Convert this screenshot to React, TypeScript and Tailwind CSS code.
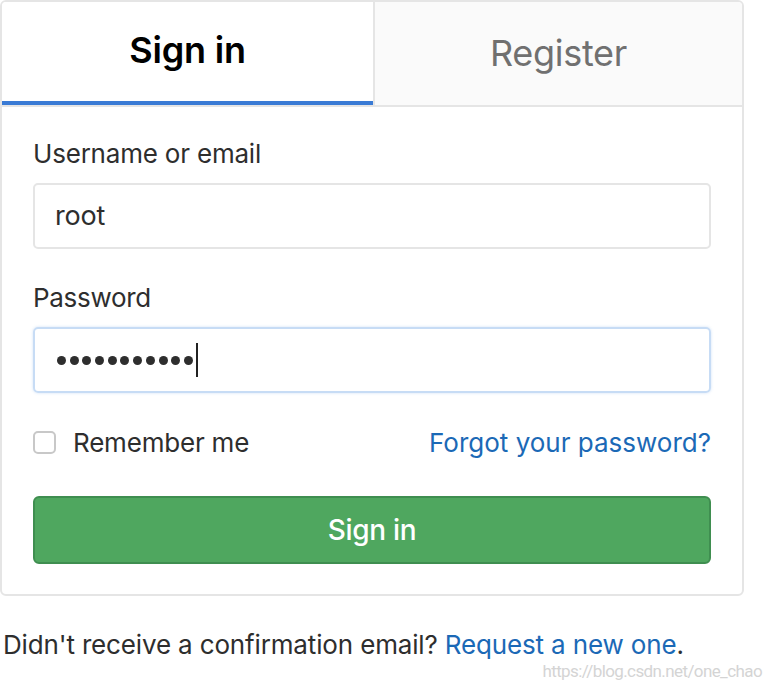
import React from 'react';

const font = { fontFamily: 'Inter, "Noto Sans", sans-serif' };

export default function App() {
  return (
    <div className="relative w-[764px] h-[684px] bg-white text-[#2e2e2e]" style={font}>
      <div className="w-[744px] rounded-[6px] border-2 border-[#e5e5e5] overflow-hidden">
        {/* tabs */}
        <div className="flex h-[105px] border-b-2 border-[#e5e5e5]">
          <div className="w-[371px] flex items-center justify-center bg-white border-b-4 border-[#3a7bd5] pb-[4px]">
            <span className="text-[36px] font-semibold text-black tracking-[-0.2px]">Sign in</span>
          </div>
          <div className="flex-1 flex items-center justify-center bg-[#fafafa] border-l-2 border-[#e5e5e5] pb-[2px]">
            <span className="text-[36px] text-[#707070] tracking-[-0.3px]">Register</span>
          </div>
        </div>

        {/* form */}
        <div className="px-[31px] pt-[30px] pb-[30px]">
          <label className="block text-[26px] leading-[34px] tracking-[-0.2px]">Username or email</label>
          <div className="mt-[12px] h-[66px] rounded-[5px] border-2 border-[#e5e5e5] flex items-center px-[20px]">
            <span className="text-[27px] tracking-[-0.2px]">root</span>
          </div>

          <label className="block mt-[32px] text-[26px] leading-[34px] tracking-[-0.3px]">Password</label>
          <div className="mt-[12px] h-[66px] rounded-[5px] border-2 border-[#c7dcf5] shadow-[0_0_3px_rgba(120,170,230,0.35)] flex items-center px-[22px]">
            <div className="flex items-center gap-[3.7px]">
              {Array.from({ length: 11 }).map((_, i) => (
                <span key={i} className="w-[9px] h-[9px] rounded-full bg-[#2e2e2e]" />
              ))}
            </div>
            <span className="ml-[3px] w-[2px] h-[34px] bg-[#222]" />
          </div>

          <div className="mt-[36px] flex items-center justify-between h-[26px]">
            <label className="flex items-center gap-[17px]">
              <span className="w-[23px] h-[23px] rounded-[5px] border-2 border-[#c8c8c8] bg-white" />
              <span className="text-[26px] tracking-[-0.2px]">Remember me</span>
            </label>
            <a className="text-[26px] text-[#1b69b6] tracking-[0px]">Forgot your password?</a>
          </div>

          <button className="mt-[41px] w-full h-[68px] rounded-[6px] bg-[#4fa75f] border-2 border-[#3f8e50] text-white text-[28px] font-medium tracking-[-0.3px]">
            Sign in
          </button>
        </div>
      </div>

      <p className="mt-[34px] ml-[3px] text-[26px] leading-[30px] tracking-[-0.15px]">
        Didn't receive a confirmation email? <a className="text-[#1b69b6]">Request a new one</a>.
      </p>

      <span className="absolute right-[2px] bottom-[3px] text-[17px] leading-[20px] text-[#d4d4d4] tracking-[-0.6px]" style={{ fontFamily: 'Roboto, sans-serif' }}>
        https://blog.csdn.net/one_chao
      </span>
    </div>
  );
}
